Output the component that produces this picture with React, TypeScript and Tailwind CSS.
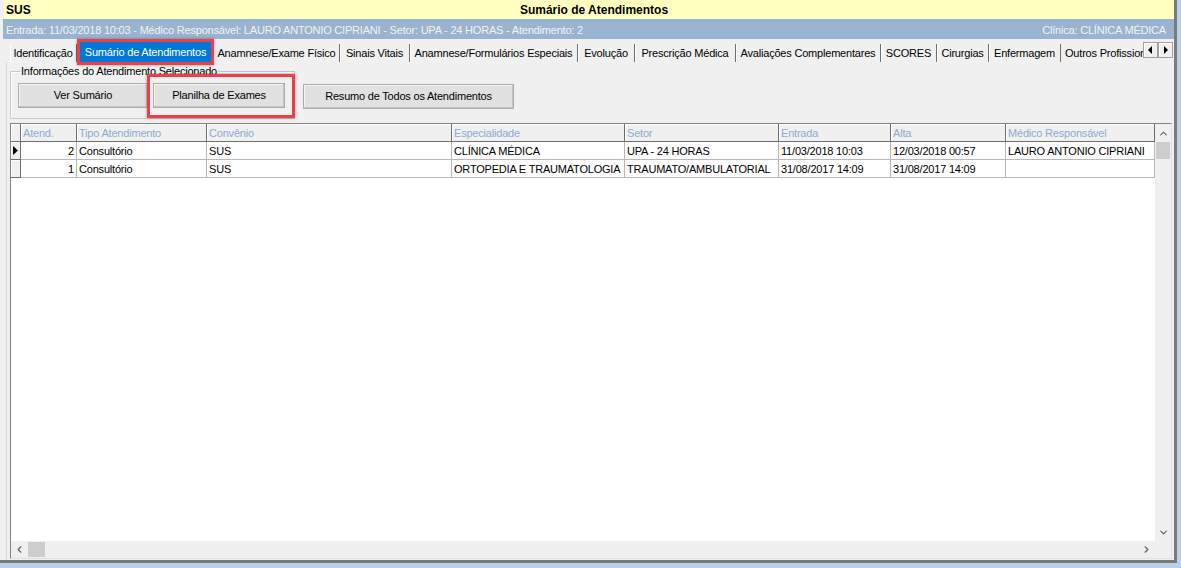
import { ChevronDown, ChevronLeft, ChevronRight, ChevronUp } from 'lucide-react';

const tabs = [
  { label: 'Identificação', w: 'w-[67px]' },
  { label: 'Sumário de Atendimentos', w: 'w-[131px]', active: true },
  { label: 'Anamnese/Exame Físico', w: 'w-[126px]' },
  { label: 'Sinais Vitais', w: 'w-[70px]' },
  { label: 'Anamnese/Formulários Especiais', w: 'w-[168px]' },
  { label: 'Evolução', w: 'w-[57px]' },
  { label: 'Prescrição Médica', w: 'w-[101px]' },
  { label: 'Avaliações Complementares', w: 'w-[145px]' },
  { label: 'SCORES', w: 'w-[56px]' },
  { label: 'Cirurgias', w: 'w-[52px]' },
  { label: 'Enfermagem', w: 'w-[72px]' },
];

const cols = [
  { label: 'Atend.', w: 'w-[56px]', right: true },
  { label: 'Tipo Atendimento', w: 'w-[130px]' },
  { label: 'Convênio', w: 'w-[245px]' },
  { label: 'Especialidade', w: 'w-[173px]' },
  { label: 'Setor', w: 'w-[154px]' },
  { label: 'Entrada', w: 'w-[112px]' },
  { label: 'Alta', w: 'w-[115px]' },
  { label: 'Médico Responsável', w: 'w-[149px]' },
];

const rows = [
  ['2', 'Consultório', 'SUS', 'CLÍNICA MÉDICA', 'UPA - 24 HORAS', '11/03/2018 10:03', '12/03/2018 00:57', 'LAURO ANTONIO CIPRIANI'],
  ['1', 'Consultório', 'SUS', 'ORTOPEDIA E TRAUMATOLOGIA', 'TRAUMATO/AMBULATORIAL', '31/08/2017 14:09', '31/08/2017 14:09', ''],
];

function Btn({ label, w }: { label: string; w: string }) {
  return (
    <div className={`${w} h-[25px] flex items-center justify-center bg-[#e1e1e1] border border-[#adadad] shadow-[inset_-1px_-1px_0_#c4c4c4,inset_1px_1px_0_#f4f4f4]`}>
      {label}
    </div>
  );
}

function TabArrow({ dir }: { dir: 'l' | 'r' }) {
  return (
    <div className="w-[15px] h-[16px] bg-[#f0f0f0] border border-[#a0a0a0] shadow-[inset_1px_1px_0_#fff] flex items-center justify-center">
      <svg width="5" height="8" viewBox="0 0 5 8">
        {dir === 'l' ? <polygon points="4,0 4,8 0,4" fill="#000" /> : <polygon points="1,0 1,8 5,4" fill="#000" />}
      </svg>
    </div>
  );
}

export default function App() {
  return (
    <div className="w-[1181px] h-[568px] bg-[#b9d1ea] overflow-hidden text-[11px] tracking-[-0.2px] text-black font-['Liberation_Sans',Arial,sans-serif]">
      <div className="w-[1177px] h-[563px] flex flex-col bg-[#f0f0f0] border-r-[3px] border-b-[3px] border-r-[#7a7a7a] border-b-[#7a7a7a] pl-[3px]">
        {/* barra de título */}
        <div className="ml-[1px] h-[19px] bg-[#ffffc0] flex items-center font-bold text-[12px] tracking-normal">
          <span className="w-[60px] pl-[2px]">SUS</span>
          <span className="flex-1 text-center pl-[10px]">Sumário de Atendimentos</span>
          <span className="w-[60px]" />
        </div>
        <div className="h-[20px] bg-[#99b4d1] text-[#f2f2f2] flex items-center justify-between pl-[3px] pr-[8px] pt-[2px]">
          <span>Entrada: 11/03/2018 10:03 - Médico Responsável: LAURO ANTONIO CIPRIANI - Setor: UPA - 24 HORAS - Atendimento: 2</span>
          <span>Clínica: CLÍNICA MÉDICA</span>
        </div>

        {/* abas */}
        <div className="h-[24px] flex items-start pl-[7px]">
          {tabs.map(t =>
            t.active ? (
              <div key={t.label} className="relative mx-[3px] mt-[3px]">
                <div className={`${t.w} h-[20px] bg-[#0078d7] text-white flex items-center justify-center`}>{t.label}</div>
                <div className="absolute -inset-[3px] border-[3px] border-[#ec3f48] shadow-[0_0_3px_rgba(0,0,0,0.35)]" />
              </div>
            ) : (
              <div key={t.label} className={`${t.w} h-[18px] mt-[5px] flex items-center justify-center border-r border-r-[#6d6d6d] shadow-[inset_1px_0_0_#fff]`}>
                {t.label}
              </div>
            )
          )}
          <div className="w-[82px] h-[18px] mt-[5px] pl-[4px] overflow-hidden whitespace-nowrap flex items-center">Outros Profissionais</div>
          <div className="flex mt-[3px]">
            <TabArrow dir="l" />
            <TabArrow dir="r" />
          </div>
        </div>

        {/* painel da aba */}
        <div className="flex-1 flex flex-col ml-[3px] mr-[2px] border-l border-l-[#d8d8d8] pl-[3px] pt-[2px]">
          <div className="flex items-start gap-[8px]">
            <fieldset className="w-[285px] h-[54px] border border-[#c8c8c8] shadow-[inset_1px_1px_0_#fff] pl-[7px]">
              <legend className="ml-[2px] px-[1px] leading-[12px]">Informações do Atendimento Selecionado</legend>
              <div className="flex gap-[5px] mt-[6px]">
                <Btn label="Ver Sumário" w="w-[130px]" />
                <div className="relative">
                  <Btn label="Planilha de Exames" w="w-[132px]" />
                  <div className="absolute -left-[6px] -right-[10px] -top-[9px] -bottom-[10px] border-[3px] border-[#ec3f48] shadow-[0_0_3px_rgba(0,0,0,0.35)]" />
                </div>
              </div>
            </fieldset>
            <div className="mt-[19px]">
              <Btn label="Resumo de Todos os Atendimentos" w="w-[211px]" />
            </div>
          </div>

          {/* grade */}
          <div className="mt-[4px] mb-[1px] w-[1162px] flex-1 flex flex-col bg-white border-l border-t border-[#828282] border-r border-r-[#e0e0e0] border-b border-b-[#e0e0e0]">
            <div className="flex-1 flex min-h-0">
              <div className="flex-1 flex flex-col">
                <div className="flex h-[18px] bg-[#f0f0f0]">
                  <div className="w-[10px] border-r border-b border-[#6d6d6d] shadow-[inset_1px_1px_0_#fff]" />
                  {cols.map(c => (
                    <div key={c.label} className={`${c.w} pl-[2px] pt-[1px] flex items-center text-[#8eaad0] border-r border-b border-[#6d6d6d] shadow-[inset_1px_1px_0_#fff] whitespace-nowrap overflow-hidden`}>
                      {c.label}
                    </div>
                  ))}
                </div>
                {rows.map((r, i) => (
                  <div key={i} className="flex h-[18px]">
                    <div className="w-[10px] bg-[#f0f0f0] border-r border-b border-[#6d6d6d] shadow-[inset_1px_1px_0_#fff] flex items-center justify-center">
                      {i === 0 && (
                        <svg width="5" height="9" viewBox="0 0 5 9">
                          <polygon points="0,0 5,4.5 0,9" fill="#000" />
                        </svg>
                      )}
                    </div>
                    {r.map((v, j) => (
                      <div key={j} className={`${cols[j].w} px-[2px] pt-[1px] flex items-center whitespace-nowrap overflow-hidden border-r border-b border-[#b8b8b8] ${cols[j].right ? 'justify-end' : ''}`}>
                        {v}
                      </div>
                    ))}
                  </div>
                ))}
              </div>
              <div className="w-[16px] bg-[#f0f0f0] flex flex-col">
                <div className="h-[18px] flex items-center justify-center">
                  <ChevronUp size={11} strokeWidth={2.5} color="#606060" />
                </div>
                <div className="h-[17px] mx-[1px] bg-[#cdcdcd]" />
                <div className="flex-1" />
                <div className="h-[17px] flex items-center justify-center">
                  <ChevronDown size={11} strokeWidth={2.5} color="#606060" />
                </div>
              </div>
            </div>
            <div className="h-[17px] flex bg-[#f0f0f0]">
              <div className="w-[17px] flex items-center justify-center">
                <ChevronLeft size={11} strokeWidth={2.5} color="#606060" />
              </div>
              <div className="w-[17px] my-[1px] bg-[#cdcdcd]" />
              <div className="flex-1" />
              <div className="w-[17px] flex items-center justify-center">
                <ChevronRight size={11} strokeWidth={2.5} color="#606060" />
              </div>
              <div className="w-[16px]" />
            </div>
          </div>
        </div>
      </div>
    </div>
  );
}
